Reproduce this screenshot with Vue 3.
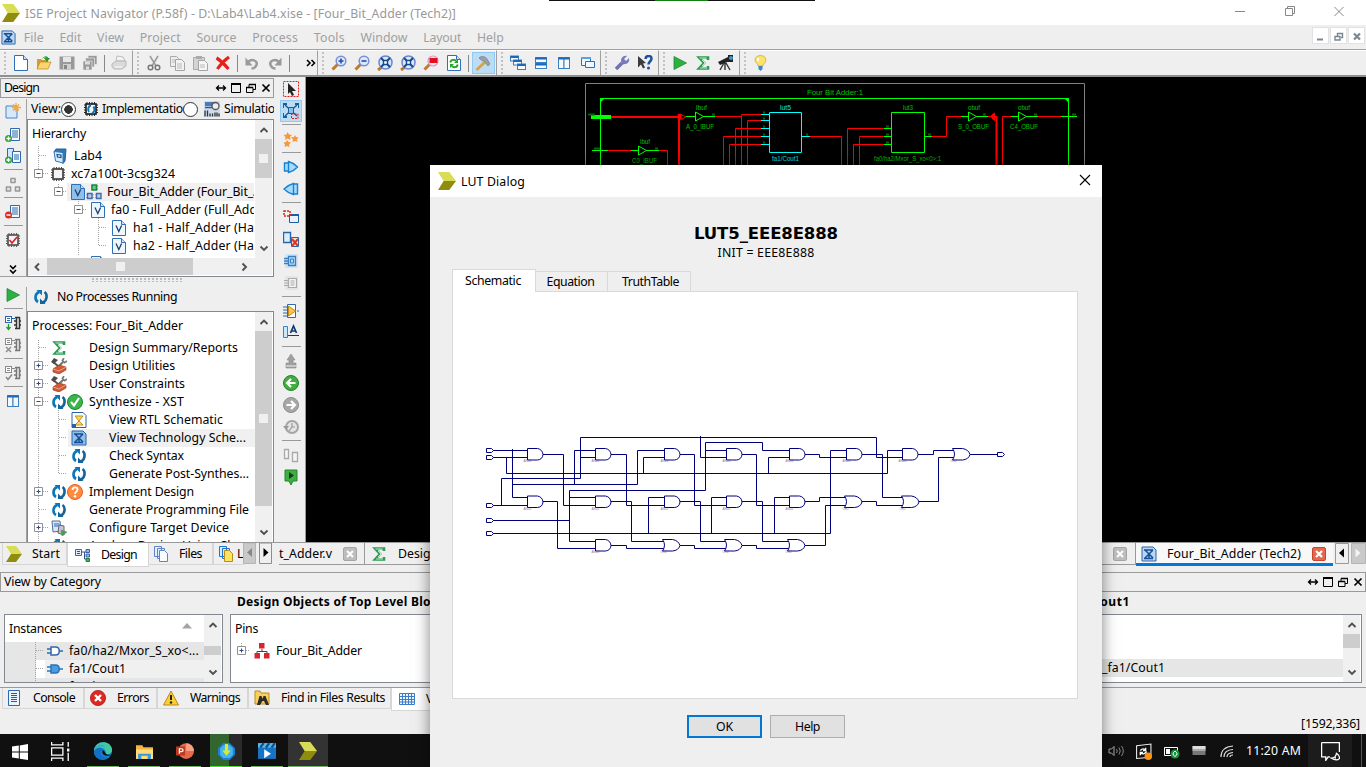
<script setup>
import { h } from 'vue'

// Spreads a label's letters so that it fills the given width in pixels.
const vFit = {
  mounted(el, { value }) {
    const w = el.getBoundingClientRect().width
    el.style.letterSpacing = (value - w) / el.textContent.length + 'px'
  },
}

const page = (extra = '') =>
  `<path d="M1.500 .5h9l4 4v11h-13z" fill="#fff" stroke="#2f6fb5"/><path d="M10.500 .5v4h4" fill="#cfe0f5" stroke="#2f6fb5"/>${extra}`
const lens = (extra) =>
  `<path d="M1.500 14.500L7 9" stroke="#c07a28" stroke-width="3"/><circle cx="10" cy="6" r="4.800" fill="#dbe8fb" stroke="#7a8fd6" stroke-width="1.500"/>${extra}`
const cycle =
  '<path d="M6 3C1.500 5 1.500 11 5 13" fill="none" stroke="#0b76b8" stroke-width="2.600"/><path d="M3.500 1h5.500v5.500z" fill="#0b76b8"/><path d="M10 13.500C14.500 11 14.500 5 11.500 3" fill="none" stroke="#14639b" stroke-width="2.600"/><path d="M12.500 15H7V9.500z" fill="#14639b"/>'
const chip = (c) =>
  `<path d="M4 1v14M6.500 1v14M9 1v14M11.500 1v14M1 4h14M1 6.500h14M1 9h14M1 11.500h14" stroke="${c}"/><rect x="3" y="3" width="10" height="10" fill="#f4f4f4" stroke="${c}" stroke-width="1.700"/>`
const schem = '<path d="M1 1h11l3 3v11H1z" fill="#b9d6f3" stroke="#2b62a6"/><path d="M3 4h9M3 12.500h9M4 4l4 4 4-4M4 12l4-4 4 4M8 8v5" fill="none" stroke="#174f94" stroke-width="1.500"/>'
const win = (x, y, w, hh) =>
  `<rect x="${x}" y="${y}" width="${w}" height="${hh}" fill="#f3f9ff" stroke="#3c7fc0"/><path d="M${x} ${y + 1}h${w}" stroke="#1d66bb" stroke-width="2"/>`
const runset = (c, g, mark) =>
  `<rect x=".5" y="1.500" width="6" height="6" fill="#fff" stroke="${c}"/><path d="M2 3.500h3M2 5.500h3M7 3.500h3" stroke="${c}"/><path d="M10 2.500h5M10 13.500h5M11.500 2v12M14.500 2v12M9 6h3M9 10h3M14 6h2M14 10h2" fill="none" stroke="${g}" stroke-width="1.500"/>${mark}`
const tools =
  '<path d="M2 4L11 11" stroke="#55514a" stroke-width="2"/><path d="M0 4l3-4 4 2-4 4z" fill="#4e4c48"/><path d="M7 9l6-6" stroke="#77756f" stroke-width="2.200"/><path d="M11 3l2-3M13 5l3-2" stroke="#77756f" stroke-width="1.600"/><path d="M2 11l6-4 7 2v3l-7 4-6-2z" fill="#cf5a35" stroke="#923219" stroke-width=".6"/><path d="M2 11l6 2 7-4" fill="none" stroke="#f0a080"/>'
const vfile = (fill) =>
  page().replace('fill="#fff"', `fill="${fill}"`) + '<path d="M5 5.500l2.800 6 2.800-6" fill="none" stroke="#1e3f6c" stroke-width="1.300"/>'

const icons = {
  logo: '<path d="M0 0h10l6 8H5z" fill="#d9dc55"/><path d="M5 8h11l-6 8H0z" fill="#8e8d10"/>',
  tech: schem,
  techSel: schem.replace('#b9d6f3', '#8fbfeb'),
  new: page(),
  open: '<path d="M1 4h4l1 1h6v9H1z" fill="#d79b35"/><path d="M1 14l3-7h11l-3 7z" fill="#fad56b" stroke="#b47b1a" stroke-width=".6"/><path d="M6 4c2-4 6-3 6-1h2l-3 4-3-4h2c-1-1-3 0-4 1z" fill="#209b2b"/>',
  save: '<path d="M.5 1.500h15v13H.5z" fill="#999"/><path d="M4 2h8v5H4z" fill="#e6e6e6"/><path d="M4 9h8v5H4z" fill="#d0d0d0"/><path d="M5 10h3v4H5z" fill="#888"/>',
  saveall: '<g stroke="#ececec" stroke-width=".7"><path d="M6 .5h9v9H6z" fill="#999"/><path d="M3.500 3h9v9h-9z" fill="#999"/><path d="M1 6h9v9H1z" fill="#999"/></g><path d="M3 6.500h5v3H3zM4 11.500h3v3H4z" fill="#ddd"/>',
  print: '<path d="M5 6l1-5 6 1 2 4z" fill="#f4f4f4" stroke="#bdbdbd"/><path d="M1 9l4-3h10v5l-4 3H3l-2-2z" fill="#dadada" stroke="#b8b8b8"/><path d="M4 12h7" stroke="#fff"/>',
  cut: '<path d="M4 1l6 10M12 1L6 11" stroke="#9a9a9a" stroke-width="1.500"/><circle cx="4.500" cy="12.500" r="2.300" fill="none" stroke="#777" stroke-width="1.500"/><circle cx="11.500" cy="12.500" r="2.300" fill="none" stroke="#777" stroke-width="1.500"/>',
  copy: '<path d="M1.500 1.500h6l2 2v8h-8z" fill="#eee" stroke="#aaa"/><path d="M6.500 4.500h6l3 3v8h-9z" fill="#f2f2f2" stroke="#a4a4a4"/><path d="M3 5h3M3 7h3M8 9h5M8 11h5M8 13h5" stroke="#bbb"/>',
  paste: '<path d="M1.500 2.500h11v12h-11z" fill="#d4d4d4" stroke="#aaa"/><path d="M4 1h6v3H4z" fill="#aaa"/><path d="M6.500 5.500h6l3 3v7h-9z" fill="#f5f5f5" stroke="#a4a4a4"/><path d="M8 10h5M8 12h5" stroke="#bbb"/>',
  del: '<path d="M1.500 3C5 5 10 10 13.500 14M14 2C10 5 5 10 2.500 14" stroke="#e8201a" stroke-width="3.200" fill="none"/>',
  undo: '<path d="M4 7c4-4 10-1 8.500 3-.8 2-2.500 3.500-5 3.500" fill="none" stroke="#9a9a9a" stroke-width="2.400"/><path d="M1.500 2.500v8h7z" fill="#9a9a9a"/>',
  redo: '<path d="M12 7C8 3 2 6 3.500 10c.8 2 2.500 3.500 5 3.500" fill="none" stroke="#9a9a9a" stroke-width="2.400"/><path d="M14.500 2.500v8h-7z" fill="#9a9a9a"/>',
  zin: lens('<path d="M10 3.500v5M7.500 6h5" stroke="#1d4fae" stroke-width="1.600"/>'),
  zout: lens('<path d="M7.500 6h5" stroke="#1d4fae" stroke-width="1.600"/>'),
  zfit: '<path d="M1 15l4-3" stroke="#c07a28" stroke-width="3"/><circle cx="8.500" cy="7.500" r="6.500" fill="#dbe8fb" stroke="#7284cf" stroke-width="1.500"/><path d="M4 3l9 9M13 3l-9 9" stroke="#124a86" stroke-width="1.800"/><path d="M6.500 5.500h4v4h-4z" fill="#fff" stroke="#124a86" stroke-width="1.400"/>',
  zred: '<path d="M1.500 14.500L7 9" stroke="#c07a28" stroke-width="3"/><circle cx="10" cy="6" r="5" fill="#fbe0ee" stroke="#d59ac4" stroke-width="1.200"/><path d="M6.500 3h8v5h-8z" fill="#e30e1c"/>',
  refresh: page('<path d="M4.500 7.500c0-3 4-3.500 5.500-1.500M11.500 9.500c0 3-4 3.500-5.500 1.500" fill="none" stroke="#27a22b" stroke-width="2"/><path d="M8 8h4V4zM8 9H4v4z" fill="#27a22b"/>'),
  hammer: '<path d="M1.500 15L10 7" stroke="#dca33a" stroke-width="2.800"/><path d="M4 3c3-3 7-1 8 1l3 5-2 2-4-5c-2 0-3-1-5-3z" fill="#98a0a8" stroke="#6b7480" stroke-width=".6"/>',
  cascade: win(0.5, 1, 8, 5) + win(3.5, 5, 8, 5) + win(7.5, 9, 8, 5.5),
  tileH: win(2.5, 2.500, 11, 5) + win(2.5, 8.500, 11, 5),
  tileV: win(2.5, 2.500, 5.5, 11) + win(8, 2.500, 5.5, 11),
  winfront: '<path d="M2.500 2.500h9v8h-9z" fill="#eef6ff" stroke="#2271bd"/><path d="M6.500 6.500h9v6h-9z" fill="#eef6ff" stroke="#2271bd"/><path d="M2 3h10" stroke="#5aa3e5" stroke-width="2"/>',
  wrench: '<path d="M2 14l6-6" stroke="#7472ae" stroke-width="3.500"/><path d="M8 9C5 3 10 0 13 1l-3 3 2 2 3-3c1 4-2 7-7 6z" fill="#7779b8"/>',
  whats: '<path d="M1 1l8 7-3 .5 2 4-2 1-2-4-3 3z" fill="#3c3c3c"/><path d="M8.500 4c0-4 6-4 6-.5 0 3-3 3-3 6" fill="none" stroke="#1b519e" stroke-width="2.500"/><circle cx="11.500" cy="13" r="1.500" fill="#1b519e"/>',
  play: '<path d="M2 1.500L14.500 8 2 14.500z" fill="#2cb03e" stroke="#23863a" stroke-width=".8"/>',
  sigma: '<path d="M13 5V2.500H4L9 8l-5 5.500h9V11" fill="none" stroke="#2f9c55" stroke-width="2.600"/><path d="M4.500 3h7M7 5l3 3-3 3M5 13h7" fill="none" stroke="#c9efd2" stroke-width=".9"/>',
  scope: '<path d="M0 7l10-5 2 4L2 10z" fill="#222"/><path d="M10 0h5v7h-5z" fill="#222"/><circle cx="13" cy="3" r="2" fill="#3a9ad9"/><path d="M6 8l-4 7M7 8v7M8 8l4 7" stroke="#333" stroke-width="1.400"/>',
  bulb: '<path d="M5 11c0-3-3-3-3-6 0-6 11-6 11 0 0 3-3 3-3 6z" fill="#ffe268" stroke="#cfa425" stroke-width=".7"/><path d="M5 3v3" stroke="#fff" stroke-width="2"/><path d="M5.500 11h4v3l-2 2-2-2z" fill="#3f83c3"/>',
  dblRight: '<path d="M4 5l3 3-3 3M8.500 5l3 3-3 3" fill="none" stroke="#000" stroke-width="1.600"/>',
  dblDown: '<path d="M5 3.500l3 3 3-3M5 8l3 3 3-3" fill="none" stroke="#000" stroke-width="1.600"/>',
  span: '<path d="M3.500 8h9M6 5.500L3.500 8 6 10.500M10 5.500l2.500 2.500-2.500 2.500" fill="none" stroke="#000" stroke-width="1.300"/>',
  max: '<path d="M3.500 4h9v8.500h-9z" fill="none" stroke="#000"/><path d="M3 4h10" stroke="#000" stroke-width="2"/>',
  rest: '<path d="M6 8V4.500h6.500v5H10M3.500 7.500H10v5H3.500z" fill="none" stroke="#000"/><path d="M6 4.500h7M3 7.500h7" stroke="#000" stroke-width="1.600"/>',
  x: '<path d="M4.500 4.500l7 7M11.500 4.500l-7 7" stroke="#000" stroke-width="1.700"/>',
  newsrc: '<path d="M1 3h11v12H1z" fill="#d7e8fb" stroke="#4a86c4"/><path d="M11 0v9M7 4.500h9M8 1.500l6 6M14 1.500l-6 6" stroke="#f5a93b" stroke-width="1.300"/>',
  addsrc: `<path d="M5.500 1.500h9v12h-9z" fill="#f4faff" stroke="#2c69ae"/><path d="M7 4h6M7 6h6M7 8h6M7 10h6" stroke="#2c69ae"/><circle cx="3.500" cy="11.500" r="3.500" fill="#33a53b"/><path d="M3.500 9.500v4M1.500 11.500h4" stroke="#fff" stroke-width="1.300"/>`,
  addcopy: `<path d="M2.500 .5h6v12h-6z" fill="#d3e7fa" stroke="#2c69ae"/><path d="M7.500 3.500h8v11h-8z" fill="#f4faff" stroke="#2c69ae"/><path d="M9 7h5M9 9h5M9 11h5" stroke="#2c69ae"/><circle cx="3.500" cy="12" r="3.500" fill="#33a53b"/><path d="M3.500 10v4M1.500 12h4" stroke="#fff" stroke-width="1.300"/>`,
  rmsrc: `<path d="M5.500 1.500h9v12h-9z" fill="#f4faff" stroke="#2c69ae"/><path d="M7 4h6M7 6h6M7 8h6M7 10h6" stroke="#2c69ae"/><circle cx="3.500" cy="11" r="3.500" fill="#df2b22"/><path d="M1.500 11h4" stroke="#fff" stroke-width="1.500"/>`,
  hier: '<g fill="#e4e4e4" stroke="#999" stroke-width="1.300"><path d="M6 1.500h4v4H6zM1.500 10h4v4h-4zM10.500 10h4v4h-4z"/></g><path d="M5 2.500h6M5 4.500h6M.5 11h6M.5 13h6M9.500 11h6M9.500 13h6" stroke="#999" stroke-dasharray="1 4"/>',
  chipcheck: chip('#555') + '<path d="M4.500 8l2.500 3 5-6" fill="none" stroke="#d32020" stroke-width="1.600"/>',
  chip: chip('#444'),
  chipblue: chip('#222') + '<path d="M8 4.500C5 5 4.500 9 6 11M9 12c3-1 3-4 1.500-6.500" fill="none" stroke="#0b76b8" stroke-width="2"/>',
  sim: '<path d="M0 0h16v16H0z" fill="#cfdcec"/><path d="M1 2h8v4.500H1M1 4h7" fill="none" stroke="#2458a6" stroke-width="1.500"/><circle cx="11.500" cy="5" r="3.500" fill="#eee" stroke="#555" stroke-width="1.300"/><path d="M1 15.500V9.500M3.500 9.500v6M6 12.500v3M8.500 12.500v3M11 15.500v-4M13 11.500v4M15 15.500v-3" fill="none" stroke="#333" stroke-width="1.300"/>',
  book: '<path d="M2 4l2-3h10l-1 12-2 2.500z" fill="#2f78b8" stroke="#2a5f96"/><path d="M2 3.500l9 1v10.500l-7.500-2z" fill="#d6ecfb" stroke="#2f78b8"/><path d="M5 6.500l4 .5v2.500l-3.500-.5z" fill="none" stroke="#1f4f8c" stroke-width="1.200"/>',
  v: vfile('#eef6ff'),
  vSel: vfile('#8fbfeb'),
  top: '<path d="M6 1h4.500v5H6z" fill="#79bd8b" stroke="#178944" stroke-width="1.400"/><path d="M1.500 9.500H6v5H1.500zM10.500 9.500H15v5h-4.500z" fill="#b7cdee" stroke="#4369a8" stroke-width="1.400"/><path d="M5 2.200h7M5 5h7" stroke="#178944" stroke-dasharray="1 5"/><path d="M.5 10.800h15M.5 13.500h15" stroke="#4369a8" stroke-dasharray="1 5 1 2 1 5"/>',
  cycle,
  tools,
  ok: '<circle cx="8" cy="8" r="7.500" fill="#3bb54a" stroke="#1a8731"/><path d="M4 8l3 3.500L12 4" fill="none" stroke="#fff" stroke-width="2.200"/>',
  ask: '<circle cx="8" cy="8" r="7.500" fill="#ff8a3c" stroke="#e4602a"/><path d="M5.500 6c0-3.500 5-3.500 5-.5C10.500 8 8 7.500 8 10" fill="none" stroke="#fff" stroke-width="1.800"/><circle cx="8" cy="12.300" r="1.200" fill="#fff"/>',
  rtl: '<path d="M1 .5h11l3 3v12H1z" fill="#fff" stroke="#2b62a6"/><path d="M4 4h8L8 9l4 4H4l4-4z" fill="#ffd65c" stroke="#c08e21"/><path d="M1 12h4v3H1z" fill="#2b62a6"/>',
  device: '<path d="M1 1h8l1 10-8 1z" fill="#dbe5f3" stroke="#526d9a"/><path d="M3 3h5v4H3z" fill="#7ea5db"/><path d="M8 5l5 1v9l-6-2z" fill="#c9c2dc" stroke="#666"/><path d="M10 10l6 2-5 4z" fill="#3aa648" stroke="#777" stroke-width=".5"/>',
  rs1: runset('#2a64aa', '#333', '<path d="M3.500 9v5M1.500 12l2 2.500 2-2.500" fill="none" stroke="#1c9a31" stroke-width="1.300"/>'),
  rs2: runset('#8a8a8a', '#777', '<path d="M1 10l5 5M6 10l-5 5" stroke="#888" stroke-width="1.300"/>'),
  rs3: runset('#8a8a8a', '#777', '<path d="M1 12l2 2.500 4-5" fill="none" stroke="#888" stroke-width="1.500"/>'),
  cols: win(2.5, 2.500, 5.5, 11) + win(8, 2.500, 5.5, 11),
  pick: '<path d="M.5 .5h15v15H.5z" fill="none" stroke="#e02020" stroke-dasharray="2 1"/><path d="M5 2l8 8h-4l2 4-2 1-2-4-2 2z" fill="#222"/>',
  nodes: '<path d="M2 2l12 11M14 2L2 13" stroke="#1b5c9c" stroke-width="1.500"/><path d="M5.500 4.500h5v6h-5z" fill="#8dbdeb" stroke="#1b5c9c"/><path d="M0 1h4M0 1v4M16 1h-4M16 1v4M0 14v-4M0 14h4" stroke="#1b5c9c" stroke-width="2"/><path d="M8.500 11h6.500v4.500H8.500z" fill="none" stroke="#e02020" stroke-dasharray="2 1"/>',
  stars: '<path d="M4.500 1l1.500 2.500 3 .5-2 2 .5 3-3-1.500L2 9l.5-3-2-2 3-.5zM12 4l1 2 2.500.5L14 8.500l.5 2.500-2.500-1-2.500 1 .5-2.500-2-2 3-.5zM4 9l1.500 2 2.500.5-2 2 .5 2.500L4 15l-2.500 1 .5-2.500-1.500-2L3 11z" fill="#f6983c"/>',
  ptRight: '<path d="M1.500 4h4v8h-4zM5.500 2.500Q11 4 14.500 8 11 12 5.500 13.500z" fill="#a6dbfb" stroke="#1882d6" stroke-width="1.400"/>',
  ptLeft: '<path d="M14.500 3h-4v10h4zM10.500 2.500Q5 4 1 8q4 4 9.500 5.500z" fill="#a6dbfb" stroke="#1882d6" stroke-width="1.400"/>',
  winadd: '<path d="M6.500 5.500h9v8h-9z" fill="#e7f2fc" stroke="#1d5c9f"/><path d="M6 6h10" stroke="#1d5c9f" stroke-width="2"/><path d="M1 2h6v5H1z" fill="none" stroke="#d92b22" stroke-width="1.500" stroke-dasharray="2 1"/>',
  windel: '<path d="M.5 1.500h7v10h-7z" fill="#dcedfc" stroke="#2368ad" stroke-width="1.400"/><path d="M8.500 6.500h7v9h-7z" fill="#f9dcd6" stroke="#2368ad"/><path d="M9 8l6 7M15 8l-6 7" stroke="#dd3427" stroke-width="2"/>',
  comp: '<path d="M2 1h13v14H2z" fill="#cfe4f6"/><path d="M5.500 3.500h7v9h-7zM1 5.500h4M1 8h4M1 10.500h4" fill="#b7dcf8" stroke="#3a7fbf" stroke-width="1.300"/><path d="M7.500 6h3v4h-3z" fill="none" stroke="#3a7fbf"/>',
  compG: '<path d="M2 1h13v14H2z" fill="#e4e4e4"/><path d="M5.500 3.500h8v9h-8zM1 5.500h4M1 8h4M1 10.500h4" fill="#f4f4f4" stroke="#aaa" stroke-width="1.200"/><path d="M7.500 6h4M7.500 8h4M7.500 10h4" stroke="#aaa"/>',
  yellowplay: '<path d="M4.500 1.500h8v13h-8z" fill="#fff" stroke="#2c69ae"/><path d="M0 4h4M0 7h4M0 10h4M0 13h4M14 8h2" stroke="#2c69ae"/><path d="M5.500 3l7 5-7 5z" fill="#fbc649" stroke="#c48a1b"/>',
  label: '<path d="M.5 2.500h4v11h-4z" fill="#cfe7fb" stroke="#2f86cf"/><path d="M7.500 9L10.500 2l3 7M8.500 7h4" fill="none" stroke="#123a7a" stroke-width="1.700"/><path d="M5 11.500h11" stroke="#123a7a"/>',
  up: '<path d="M8 1l4 6h-2v3h3v5H3v-5h3V7H4z" fill="#a0a0a0" stroke="#888" stroke-width=".6"/><path d="M3 13h10" stroke="#eee"/>',
  back: '<circle cx="8" cy="8" r="7.500" fill="#43ad3d" stroke="#23852b"/><path d="M8 4L4 8l4 4M4 8h8.500" fill="none" stroke="#fff" stroke-width="2.200"/>',
  fwd: '<circle cx="8" cy="8" r="7.500" fill="#a7a7a7" stroke="#8d8d8d"/><path d="M8 4l4 4-4 4M12 8H3.500" fill="none" stroke="#fff" stroke-width="2.200"/>',
  hist: '<circle cx="9" cy="8" r="6" fill="#e4e4e4" stroke="#a5a5a5" stroke-width="2"/><path d="M0 7h6l-3 4z" fill="#999"/><path d="M9 4v4h3M6 12l3-4" fill="none" stroke="#999" stroke-width="1.200"/>',
  twoG: '<path d="M1.500 2.500h4v9h-4zM9.500 5.500h5v9h-5z" fill="#f4f4f4" stroke="#a9a9a9" stroke-width="1.300"/>',
  marker: '<path d="M2 1h12v11h-4l-2 4-2-4H2z" fill="#3fae43" stroke="#2a8430"/><path d="M6 3l5 3.500L6 10z" fill="#173a1c"/>',
  designtab: '<path d="M.5 2.500h6v6h-6z" fill="#e7effc" stroke="#3d62a8"/><path d="M2 4.500h3M2 6.500h3M7 5h5M9.500 5v7h3" fill="none" stroke="#35528d"/><path d="M11 2.500h3.500v3H11zM11 7h3.500v3H11z" fill="#9ab5e5" stroke="#3d62a8"/><path d="M11 11.500h3.500v3H11z" fill="#48b069" stroke="#277c43"/>',
  files: '<path d="M1.500 .5h7v10h-7zM4.500 2.500h7v10h-7z" fill="#e6f0fc" stroke="#5f84c6"/><path d="M6.500 4.500h5l3 3v8h-8z" fill="#fafdff" stroke="#5f84c6"/>',
  libs: '<path d="M1.500 .5h7v10h-7zM4.500 2.500h7v10h-7z" fill="#d3eaff" stroke="#1d74ca"/><path d="M6.500 4.500h5l3 3v8h-8z" fill="#ffe265" stroke="#b78d1a"/>',
  console: '<path d="M2.500 .5h11v15h-11z" fill="#eaf4ff" stroke="#2c69ae"/><path d="M5 3.500h6M5 5.500h6M5 7.500h6M5 9.500h6M5 11.500h6" stroke="#1b5db5"/>',
  error: '<circle cx="8" cy="8" r="7.600" fill="#dc2a22" stroke="#a81713" stroke-width=".8"/><path d="M5 5l6 6M11 5l-6 6" stroke="#fff" stroke-width="2.400"/>',
  warn: '<path d="M8 1l7.500 14H.5z" fill="#fdce2f" stroke="#b98a1c"/><path d="M8 5v5" stroke="#222" stroke-width="2"/><circle cx="8" cy="12.500" r="1.200" fill="#222"/>',
  find: '<path d="M1 1h5l1 2h8v11H1z" fill="#f7cf5a" stroke="#b98c22"/><path d="M3 15l2.500-9h2l1 3 1-3h2L15 15h-3l-2-4H8.500L6 15z" fill="#2c2c2c"/>',
  table: '<path d="M.5 2.500h15v11H.5z" fill="#edf5ff"/><path d="M.5 2.500h15v11H.5zM.5 5.500h15M.5 8.500h15M.5 11h15M3.500 2v12M6.500 2v12M9.500 2v12M12.500 2v12" fill="none" stroke="#3d7cc7"/>',
  gate: '<path d="M4 4h4.500c5 0 5 8 0 8H4zM0 6h4M0 10h4M12 8h4" fill="#fff" stroke="#3267ad" stroke-width="1.500"/>',
  gateSel: '<path d="M4 4h4.500c5 0 5 8 0 8H4zM0 6h4M0 10h4M12 8h4" fill="#4b9de0" stroke="#2c73b7" stroke-width="1.500"/>',
  redhier: '<path d="M8 6v3M3 11V8.500h10V11" fill="none" stroke="#444"/><path d="M5 0h5.500v5.500H5zM.5 10H6v5.500H.5zM10 10h5.500v5.500H10z" fill="#d62630"/>',
  closeG: '<rect x="1.500" y="1.500" width="13" height="13" rx="1.500" fill="#bdbdbd" stroke="#a5a5a5"/><path d="M5 5l6 6M11 5l-6 6" stroke="#fff" stroke-width="2"/>',
  closeR: '<rect x="1.500" y="1.500" width="13" height="13" rx="1.500" fill="#e2694f" stroke="#c8442d"/><path d="M5 5l6 6M11 5l-6 6" stroke="#fff" stroke-width="2.200"/>',
  plus: '<path d="M3.500 3.500h8v8h-8z" fill="#fff" stroke="#919191"/><path d="M5.500 7.500h4M7.500 5.500v4" stroke="#2b4a8c"/>',
  minus: '<path d="M3.500 3.500h8v8h-8z" fill="#fff" stroke="#919191"/><path d="M5.500 7.500h4" stroke="#2b4a8c"/>',
  cUp: '<path d="M4.500 10L8 6.500 11.500 10" fill="none" stroke="#505050" stroke-width="1.900"/>',
  cDown: '<path d="M4.500 6.500L8 10l3.500-3.500" fill="none" stroke="#505050" stroke-width="1.900"/>',
  cLeft: '<path d="M10 4.500L6.500 8l3.500 3.500" fill="none" stroke="#505050" stroke-width="1.900"/>',
  cRight: '<path d="M6.500 4.500L10 8l-3.500 3.500" fill="none" stroke="#505050" stroke-width="1.900"/>',
  windows: '<path d="M0 2.500L6.800 1.500v6H0zM7.800 1.400L16 0v7.500H7.800zM0 8.500h6.800v6L0 13.500zM7.800 8.500H16V16l-8.200-1.200z" fill="#fff"/>',
  taskview: '<path d="M.5 0v2.500h9.500V0M.5 16v-2.500h9.500V16M.5 5h9.500v6H.5zM14.500 0v4M14.500 9v7" fill="none" stroke="#fff" stroke-width="1.100"/><path d="M13.500 5.500h2v2.500h-2z" fill="#fff"/>',
  edge: '<circle cx="8" cy="8" r="8" fill="#1684d6"/><path d="M0 8C0-1 14-3 16 6c1 4-4 6-6 4 2-4-5-7-10-2z" fill="#43c9a0"/><path d="M0 7C2 2 9 1 10 5 5 2 1 5 0 8z" fill="#2fa5d8"/><path d="M0 8c4-5 8-3 8-1-4 2-1 8 5 6-6 6-14 1-13-5z" fill="#1370c4"/><path d="M8 7c-2 3 1 6 6 5l2-1c-3 1-6 0-6-2z" fill="#111"/>',
  explorer: '<path d="M0 2h6l1 2h9v11H0z" fill="#efb53f"/><path d="M0 6h16v9H0z" fill="#ffdb7a"/><path d="M2 15v-5h12v5h-3v-3H5v3z" fill="#3d98da"/>',
  ppt: '<circle cx="9" cy="8" r="7" fill="#e46a4b"/><path d="M9 1a7 7 0 017 7H9z" fill="#f6a184"/><path d="M0 4h8v8H0z" fill="#bd3a20"/><path d="M3 10.500V6h1.800c2 0 2 2.500 0 2.500H3" fill="none" stroke="#fff" stroke-width="1.100"/>',
  idm: '<path d="M5 0h6l5 5v6l-5 5H5l-5-5V5z" fill="#1d7fd5"/><path d="M5 2h6l3 3v6l-3 3H5l-3-3V5z" fill="#44b4f1"/><path d="M6.500 1h3v6H12l-4 5-4-5h2.500z" fill="#d5ea38"/>',
  movie: '<path d="M0 1h16v14H0z" fill="#1574c6"/><path d="M0 1h16v4H0z" fill="#56b8ea"/><path d="M2 5l3-4M7 5l3-4M12 5l3-4" stroke="#114d91" stroke-width="2"/><path d="M5.500 6.500l6 4-6 4z" fill="#fff"/>',
  vol: '<path d="M1 6h2.500L6 3.500v9L3.500 10H1z" fill="none" stroke="#aaa"/><path d="M8.500 6q1.500 2 0 4M11 4.500q2.500 3.500 0 7M13.500 3q3.500 5 0 10" fill="none" stroke="#888"/>',
  upd: '<path d="M1.500 2.500L15 1v12.500l-13.500 1z" fill="none" stroke="#eee"/><path d="M5 7q3-3 5 0M11 8q-3 4-6 1M10 4.500V7H7.500M5 11.500V9h2.500" fill="none" stroke="#fff" stroke-width="1.300"/><circle cx="12.500" cy="12.500" r="3.500" fill="#ff9411"/>',
  batt: '<path d="M.5 4.500h13v8H.5z" fill="none" stroke="#fff"/><path d="M2 6h4v5H2z" fill="#fff"/><circle cx="11" cy="11" r="4.500" fill="#16913b"/><path d="M11 8q4 3 0 5.500Q7 11 11 8z" fill="none" stroke="#fff"/>',
  kb: '<path d="M1.500 3h13v9h-13z" fill="#777"/><path d="M1.500 3h13v3h-13z" fill="#ddd"/><path d="M1.500 6h13v2h-13z" fill="#aaa"/>',
  wifi: '<path d="M2 14Q2 4 14 3M5 14Q5 7 14 6.500M8 14Q8 10 14 9.500M11 14q0-2 3-2" fill="none" stroke="#ddd" stroke-width="1.200"/>',
  notif: '<path d="M.5 .5h15v8M7.500 12.500H6l-2 3v-3H.5V.5" fill="none" stroke="#fff" stroke-width="1.100"/><path d="M8.500 13.500q4 0 4.500-4 3 2 2.500 4.500-2.500 2.500-7-.5zM12 14v-2.500" fill="none" stroke="#fff"/>',
}
const Ic = (p) =>
  h('svg', { class: 'ic', width: p.s || 16, height: p.s || 16, viewBox: '0 0 16 16', innerHTML: icons[p.n] })
Ic.props = ['n', 's']

const menus = [['File', 20], ['Edit', 22], ['View', 27], ['Project', 41], ['Source', 40], ['Process', 46], ['Tools', 31], ['Window', 47], ['Layout', 38], ['Help', 27]]
const bars = [
  { w: 133, items: ['new', 'open', 'save', 'saveall', '|', 'print'] },
  { w: 185, items: ['cut', 'copy', 'paste', 'del', '|', 'undo', 'redo', '|', '', 'dblRight'] },
  { w: 179, items: ['zin', 'zout', 'zfit', 'zfit', 'zred', 'refresh', '|', 'hammer'] },
  { w: 104, items: ['cascade', 'tileH', 'tileV', 'winfront'] },
  { w: 58, items: ['wrench', 'whats'] },
  { w: 81, items: ['play', 'sigma', 'scope'] },
  { w: 0, items: ['bulb'] },
]

// Turns a list of [icon, centre] pairs into the gaps of a vertical icon strip.
const strip = (top, size, list) => {
  let bottom = top
  return list.map(([n, c]) => {
    const s = n === '|' ? 1 : size
    const start = c - Math.floor(s / 2)
    const gap = start - bottom
    bottom = start + s
    return { n, gap: gap + 'px' }
  })
}
const side1 = strip(99, 16, [['newsrc', 111], ['addsrc', 135], ['addcopy', 156], ['|', 169], ['hier', 185], ['|', 197], ['rmsrc', 212], ['|', 225], ['chipcheck', 240], ['dblDown', 270]])
const side2 = strip(287, 16, [['play', 295], ['|', 308], ['rs1', 323], ['rs2', 345], ['|', 358], ['rs3', 373], ['|', 386], ['cols', 401]])
const vbar = strip(77, 22, [['pick', 89], ['nodes', 111], ['|', 124], ['stars', 139], ['|', 152], ['ptRight', 167], ['ptLeft', 189], ['|', 202], ['winadd', 217], ['windel', 239], ['comp', 261], ['compG', 283], ['|', 296], ['yellowplay', 311], ['label', 332], ['|', 346], ['up', 361], ['back', 383], ['fwd', 405], ['hist', 427], ['|', 440], ['twoG', 455], ['marker', 477]])

const hier = [
  { pad: 24, icons: ['book'], t: 'Lab4', w: 28, c: 'far' },
  { pad: 4, exp: 'minus', icons: ['chip'], t: 'xc7a100t-3csg324', w: 104 },
  { pad: 24, exp: 'minus', icons: ['vSel', 'top'], t: 'Four_Bit_Adder (Four_Bit_A', w: 154, sel: true },
  { pad: 44, exp: 'minus', icons: ['v'], t: 'fa0 - Full_Adder (Full_Add', w: 146 },
  { pad: 83, icons: ['v'], t: 'ha1 - Half_Adder (Ha', w: 121, c: 'far' },
  { pad: 83, icons: ['v'], t: 'ha2 - Half_Adder (Ha', w: 121, c: 'far' },
  { pad: 44, exp: 'plus', icons: ['v'], t: 'fa1 - Full_Adder (Full_Add', w: 145 },
]
const procs = [
  { icons: ['sigma'], t: 'Design Summary/Reports', w: 149 },
  { exp: 'plus', icons: ['tools'], t: 'Design Utilities', w: 86 },
  { exp: 'plus', icons: ['tools'], t: 'User Constraints', w: 96 },
  { exp: 'minus', icons: ['cycle', 'ok'], t: 'Synthesize - XST', w: 95 },
  { sub: true, icons: ['rtl'], t: 'View RTL Schematic', w: 114 },
  { sub: true, icons: ['techSel'], t: 'View Technology Sche...', w: 137, sel: true },
  { sub: true, icons: ['cycle'], t: 'Check Syntax', w: 75 },
  { sub: true, icons: ['cycle'], t: 'Generate Post-Synthes...', w: 140 },
  { exp: 'plus', icons: ['cycle', 'ask'], t: 'Implement Design', w: 105 },
  { icons: ['cycle'], t: 'Generate Programming File', w: 160 },
  { exp: 'plus', icons: ['device'], t: 'Configure Target Device', w: 140 },
  { icons: ['cycle'], t: 'Analyze Design Using Ch', w: 146 },
]
const bottomTabs = [
  { n: 'console', t: 'Console', w: 82, tw: 42 },
  { n: 'error', t: 'Errors', w: 73, tw: 32 },
  { n: 'warn', t: 'Warnings', w: 91, tw: 50 },
  { n: 'find', t: 'Find in Files Results', w: 143, tw: 104 },
]
const apps = [
  { n: 'windows', l: 0, w: 40, s: 16 }, { n: 'taskview', l: 0, w: 40, s: 19 },
  { n: 'edge', l: 7, w: 32, s: 18, on: 1 }, { n: 'explorer', l: 9, w: 32, s: 17, on: 1 },
  { n: 'ppt', l: 9, w: 32, s: 18, on: 1 }, { n: 'idm', l: 9, w: 32, s: 17, on: 1, dl: 1 },
  { n: 'movie', l: 9, w: 32, s: 18, on: 1 }, { n: 'logo', l: 5, w: 40, s: 18, on: 1, act: 1 },
]

// LUT gate network
const ands = [[527.5, 454], [595.5, 454], [664.5, 454], [726.5, 454], [789.5, 454], [846.5, 454], [902.5, 454], [527.5, 501.5], [595.5, 501.5], [664.5, 501.5], [726.5, 501.5], [789.5, 501.5], [595.5, 545]]
const ors = [[952.5, 454], [844.5, 501.5], [901.5, 501.5], [662.5, 545], [724.5, 545], [787.5, 545]]
const ports = [450.5, 457.5, 505.5, 520.5, 533.5]
const wires = [
  'M493 450.5H527M512.5 449V497.5H527M512.5 484.5H637.5V450.5H664M574.5 484.5V450.5H595',
  'M493 457.5H527M506.5 457.5V473.5H887.5V450.5H902M643.5 473.5V457.5H664M768.5 473.5V457.5H789',
  'M493 505.5H527M501.5 505.5V478.5H580.5V437.5H876.5V457.5H902M580.5 457.5H595M700.5 436V457.5H726',
  'M493 520.5H569.5M569.5 497.5H595M595 541.5H569.5V490.5H705.5V442.5H762.5V450.5H789M705.5 450.5H726',
  'M493 533.5H830.5V450.5H846M648.5 533.5V497.5H664M711.5 533.5V497.5H726M774.5 533.5V497.5H789',
  'M543 454.5H563.5V505.5H595M611 454.5H626.5V505.5H664M680 454.5H694.5V505.5H726M742 454.5H756.5V505.5H789',
  'M805 454.5H819.5V457.5H846M862 454.5H882.5V497.5H904M918 454.5H933.5V450.5H955M970 454.5H997',
  'M543 501.5H557.5V548.5H595M611 501.5H631.5V541.5H665M680 501.5H700.5V541.5H727M742 501.5H762.5V541.5H790M805 501.5H819.5V497.5H847M862 501.5H876.5V505.5H904M919 501.5H938.5V457.5H955',
  'M611 545.5H626.5V548.5H665M680 545.5H694.5V548.5H727M742 545.5H756.5V548.5H790M805 545.5H825.5V505.5H847',
].join('')
const bufs = [[695.5, 117], [638.5, 151], [968.5, 117], [1018.5, 117]]
const labels = [
  [807, 95, 'Four Bit Adder:1', 56], [696, 109.5, 'ibuf', 11], [686, 128.5, 'A_0_IBUF', 28], [640, 143.5, 'ibuf', 10], [632, 162.5, 'C0_IBUF', 25],
  [903, 109.5, 'lut3', 10], [874, 160.5, 'fa0/ha2/Mxor_S_xo<0>:1', 67], [968, 109.5, 'obuf', 12], [958, 128.5, 'S_0_OBUF', 31], [1018, 109.5, 'obuf', 12], [1010, 128.5, 'C4_OBUF', 28],
]
</script>

<template>
  <div class="screen">
    <header class="title">
      <Ic n="logo" s="18" /><span v-fit="431">ISE Project Navigator (P.58f) - D:\Lab4\Lab4.xise - [Four_Bit_Adder (Tech2)]</span>
      <div class="notch"><i></i></div>
      <svg class="winbtns" width="110" height="16"><path d="M1 8.500h10M51.500 5.500h7v7h-7zM53.500 5v-1.500h7v7H59M100.500 4l9 9M109.500 4l-9 9" fill="none" stroke="#888" /></svg>
    </header>
    <nav class="menu">
      <Ic n="tech" s="15" />
      <span v-for="m in menus" :key="m[0]" v-fit="m[1]">{{ m[0] }}</span>
      <div class="mdi">
        <svg width="17" height="17"><path d="M4 11.500h6" stroke="#7a8593" stroke-width="2" /></svg>
        <svg width="17" height="17"><path d="M6.500 8V5.500h5v4H10M4 8.500h5v3.500H4z" fill="none" stroke="#7a8593" stroke-width="1.400" /></svg>
        <svg width="17" height="17"><path d="M5 5.500l6 6M11 5.500l-6 6" stroke="#7a8593" stroke-width="2.200" /></svg>
      </div>
    </nav>
    <div class="toolbar">
      <div v-for="(b, i) in bars" :key="i" class="bar" :class="{ last: !b.w }" :style="{ width: b.w ? b.w + 'px' : 'auto' }">
        <i class="grip"></i>
        <template v-for="(n, j) in b.items" :key="j">
          <i v-if="n === '|'" class="vsep"></i>
          <i v-else-if="!n" class="gap"></i>
          <div v-else class="tb" :class="{ on: n === 'hammer' }"><Ic :n="n" /></div>
        </template>
      </div>
    </div>

    <main class="work">
      <section class="left">
        <div class="dockhead"><span v-fit="35">Design</span><div class="dockbtns"><Ic n="span" /><Ic n="max" /><Ic n="rest" /><Ic n="x" /></div></div>
        <div class="split">
          <div class="strip s1">
            <template v-for="(r, i) in side1" :key="i">
              <i v-if="r.n === '|'" class="hsep" :style="{ marginTop: r.gap }"></i>
              <div v-else class="cell" :style="{ marginTop: r.gap }"><Ic :n="r.n" /></div>
            </template>
          </div>
          <div class="pane">
            <div class="viewrow">
              <span v-fit="30">View:</span><i class="radio on"></i><Ic n="chipblue" /><span v-fit="88" class="impl">Implementation</span><i class="radio r2"></i><Ic n="sim" /><span v-fit="58">Simulation</span>
            </div>
            <div class="box tree1">
              <svg class="guides" width="225" height="137"><path d="M10.500 26v34M11 35.500h8M15 53.500h5M30.500 64v4M35 71.500h4M50.500 81v4M55 89.500h4M50.500 98v38M70.500 98v27M71 107.500h8M71 125.500h8" /></svg>
              <div class="scroll">
                <div class="head"><span v-fit="54">Hierarchy</span></div>
                <div v-for="(r, i) in hier" :key="i" class="row" :style="{ paddingLeft: r.pad + 'px' }">
                  <Ic v-if="r.exp" :n="r.exp" class="exp" />
                  <div class="fill" :class="{ sel: r.sel, in: r.exp, far: r.c }"><Ic v-for="c in r.icons" :key="c" :n="c" /><span v-fit="r.w">{{ r.t }}</span></div>
                </div>
              </div>
              <div class="vs"><Ic n="cUp" /><div class="thumb a"><i></i></div><Ic n="cDown" /></div>
              <div class="hs"><Ic n="cLeft" /><div class="thumb"><i></i></div><Ic n="cRight" /></div>
            </div>
          </div>
        </div>
        <div class="dots"><i></i></div>
        <div class="split low">
          <div class="strip s2">
            <template v-for="(r, i) in side2" :key="i">
              <i v-if="r.n === '|'" class="hsep" :style="{ marginTop: r.gap }"></i>
              <div v-else class="cell" :style="{ marginTop: r.gap }"><Ic :n="r.n" /></div>
            </template>
          </div>
          <div class="pane">
            <div class="status"><Ic n="cycle" /><span v-fit="120">No Processes Running</span></div>
            <div class="box tree2">
              <svg class="guides" width="225" height="230"><path d="M10.500 28v202M11 35.500h8M15 53.500h5M15 71.500h5M15 89.500h5M15 179.500h5M11 197.500h8M15 215.500h5M30.500 98v63M31 107.500h8M31 125.500h8M31 143.500h8M31 161.500h8" /></svg>
              <div class="scroll">
                <div class="head"><span v-fit="151">Processes: Four_Bit_Adder</span></div>
                <div v-for="(r, i) in procs" :key="i" class="row p" :class="{ sub: r.sub }">
                  <div class="ex"><Ic v-if="r.exp" :n="r.exp" /></div>
                  <div class="fill" :class="{ sel: r.sel }"><div class="pi"><Ic v-for="c in r.icons" :key="c" :n="c" /></div><span v-fit="r.w">{{ r.t }}</span></div>
                </div>
              </div>
              <div class="vs"><Ic n="cUp" /><div class="thumb b"><i></i></div><Ic n="cDown" /></div>
            </div>
          </div>
        </div>
      </section>

      <aside class="vbar">
        <template v-for="(r, i) in vbar" :key="i">
          <i v-if="r.n === '|'" class="hsep" :style="{ marginTop: r.gap }"></i>
          <div v-else class="vc" :class="{ on: r.n === 'nodes' }" :style="{ marginTop: r.gap }"><Ic :n="r.n" /></div>
        </template>
      </aside>

      <section class="canvas">
        <svg width="1060" height="465" viewBox="306 77 1060 465">
          <path d="M585.500 542V83.500H1084.500V542" class="n gray" />
          <path d="M600.500 542V98.500H1068.500V542" class="n lime" />
          <path d="M600 98h5l-5 5zM1069 98h-5l5 5z" fill="#0f0" />
          <path d="M608 117H679V170M992 117h4.500V170" class="n red w2" />
          <path d="M678 114.500l3-.5v5l-3 .5zM994.500 113l-3 2.500v2l3 3z" class="red" fill="#f00" />
          <path d="M681 114.500l5 2.500-5 2.500M987 116.500h5M715 116.500H741.500M741.500 170V114.500H762M747.500 170V120.500H762M735.500 170V128.500H762M723.500 170V136.500H762M729.500 170V144.500H762M809 136.500H841.500V170M847.500 170V128.500H884M859.500 170V136.500H884M853.500 170V144.500H884M931 136.500H946.500V116.500H962M1002.500 170V116.500H1012M1037 116.500H1062M607 150.500H632M658 150.500H667.500V170" class="n red" />
          <path d="M591 117h20" stroke="#0f0" stroke-width="4" />
          <path d="M686 116.500h10M703 116.500h12M592 150.500h16M631 150.500h8M646 150.500h13M961 116.500h8M976 116.500h12M1011 116.500h8M1026 116.500h12M1061 116.500h16M884 128.500h7M884 136.500h7M884 144.500h7M925 136.500h7M891.500 112.500h33v40h-33z" class="n lime" />
          <path d="M761 114.500h8M761 120.500h8M761 128.500h8M761 136.500h8M761 144.500h8M802 136.500h8M769.500 112.500h32v40h-32z" class="n cyan" />
          <path v-for="b in bufs" :key="b[0]" :d="`M${b[0]} ${b[1] - 5}v9l8-4.500z`" class="n lime" />
          <g class="lab"><text v-for="(l, i) in labels" :key="i" :x="l[0]" :y="l[1]" :textLength="l[3]" lengthAdjust="spacingAndGlyphs">{{ l[2] }}</text></g>
          <g class="lab c"><text x="780" y="109.500" textLength="11" lengthAdjust="spacingAndGlyphs">lut5</text><text x="772" y="160.500" textLength="27" lengthAdjust="spacingAndGlyphs">fa1/Cout1</text></g>
          <path d="M588 114.500h7M594 148.500h6M763 112.500h2M763 118.500h2M763 126.500h2M763 134.500h2M763 142.500h2M806 134.500h2M886 126.500h3M886 134.500h3M886 142.500h3M928 134.500h3M712 114.500h3M983 114.500h3M1034 114.500h3M1072 114.500h4M655 148.500h3" stroke="#086008" stroke-width="2" />
        </svg>
      </section>
    </main>

    <div class="tabs">
      <div class="ltabs">
        <div class="tab start"><Ic n="logo" /><span v-fit="28">Start</span></div>
        <div class="tab des"><Ic n="designtab" /><span v-fit="36">Design</span></div>
        <div class="tab fil"><Ic n="files" /><span v-fit="23">Files</span></div>
        <div class="tab lib"><Ic n="libs" /><span>L</span></div>
        <svg class="nav" width="32" height="21"><path d="M.5 0h12v20.500H.5z" fill="#c9c9c9" stroke="#b5b5b5" /><path d="M9 5v9l-5-4.500z" fill="#888" /><path d="M16.500 0h12v20.500h-12z" fill="#efefef" stroke="#8e8e8e" /><path d="M20.500 5v9l5-4.500z" fill="#000" /></svg>
      </div>
      <div class="dtabs">
        <div class="tab d1"><span v-fit="53">t_Adder.v</span><Ic n="closeG" /></div>
        <div class="tab d2"><Ic n="sigma" /><span v-fit="149">Design Summary/Reports</span></div>
        <div class="tab d3"><Ic n="closeG" /></div>
        <div class="tab d4"><Ic n="tech" /><span v-fit="134">Four_Bit_Adder (Tech2)</span><Ic n="closeR" /></div>
        <svg class="dnav" width="31" height="22"><path d="M.5 .5h13v20H.5z" fill="#efefef" stroke="#999" /><path d="M9 5.500v9l-5-4.500z" fill="#000" /><path d="M16.500 .5h14v20h-14z" fill="#c9c9c9" stroke="#b5b5b5" /><path d="M20.500 5.500v9l5-4.500z" fill="#f4f4f4" /></svg>
      </div>
    </div>

    <section class="cat">
      <div class="dockhead wide"><span v-fit="97">View by Category</span><div class="dockbtns"><Ic n="span" /><Ic n="max" /><Ic n="rest" /><Ic n="x" /></div></div>
      <div class="caps"><b v-fit="208">Design Objects of Top Level Block</b><b v-fit="218">Properties of Instance: fa1/Cout1</b></div>
      <div class="lists">
        <div class="box inst">
          <div class="scroll">
            <div class="head"><span v-fit="53">Instances</span><svg width="10" height="6"><path d="M0 5.500L5 0l5 5.500z" fill="#a5a5a5" /></svg></div>
            <div class="ir sel"><Ic n="gate" /><span v-fit="130">fa0/ha2/Mxor_S_xo&lt;...</span></div>
            <div class="ir half"><Ic n="gateSel" /><span v-fit="57">fa1/Cout1</span></div>
            <div class="ir sel"><Ic n="gate" /><span v-fit="130">fa1/ha2/Mxor_S_xo&lt;...</span></div>
          </div>
          <svg class="guides" width="45" height="67"><path d="M30.500 27v40M31 35.500h8M31 53.500h8" /></svg>
          <div class="vs"><Ic n="cUp" /><div class="thumb c"></div><Ic n="cDown" /></div>
        </div>
        <div class="box pins">
          <div class="head"><span v-fit="23">Pins</span></div>
          <div class="ir"><Ic n="plus" /><Ic n="redhier" /><span v-fit="86">Four_Bit_Adder</span></div>
          <svg class="guides" width="25" height="67"><path d="M10.500 28v4M15 35.500h4" /></svg>
        </div>
        <div class="box sig">
          <div class="scroll"><div class="srow"><span v-fit="63">_fa1/Cout1</span></div></div>
          <div class="vs"><Ic n="cUp" /><div class="thumb d"></div><Ic n="cDown" /></div>
        </div>
      </div>
    </section>

    <div class="btabs">
      <div v-for="b in bottomTabs" :key="b.t" class="bt" :style="{ width: b.w + 'px' }"><Ic :n="b.n" /><span v-fit="b.tw">{{ b.t }}</span></div>
      <div class="bt cur"><Ic n="table" /><span v-fit="97">View by Category</span></div>
    </div>
    <div class="coords"><span v-fit="59">[1592,336]</span></div>

    <footer class="task">
      <div v-for="a in apps" :key="a.n" class="app" :class="{ run: a.on, dl: a.dl, act: a.act }" :style="{ width: a.w + 'px', marginLeft: a.l + 'px' }"><Ic :n="a.n" :s="a.s" /></div>
      <div class="tray">
        <Ic n="vol" /><Ic n="upd" s="17" /><Ic n="batt" /><Ic n="kb" /><Ic n="wifi" />
        <span v-fit="55">11:20 AM</span>
        <div class="nt"><Ic n="notif" s="19" /></div><i></i>
      </div>
    </footer>

    <div class="dialog">
      <div class="dtitle"><Ic n="logo" s="18" /><span v-fit="64">LUT Dialog</span><svg width="12" height="12"><path d="M1 1l10 10M11 1L1 11" stroke="#000" stroke-width="1.100" /></svg></div>
      <h1><span v-fit="144">LUT5_EEE8E888</span></h1>
      <p><span v-fit="97">INIT = EEE8E888</span></p>
      <div class="dlgtabs"><div class="cur"><span v-fit="56">Schematic</span></div><div class="eq"><span v-fit="48">Equation</span></div><div class="tt"><span v-fit="57">TruthTable</span></div></div>
      <div class="sheet">
        <svg width="624" height="406" viewBox="453 292 624 406">
          <g class="net">
            <path :d="wires" />
            <path v-for="(a, i) in ands" :key="'a' + i" class="g" :d="`M${a[0]} ${a[1] - 5.5}h10q5 1 5.500 6q-.5 5-5.500 5.500h-10z`" />
            <path v-for="(a, i) in ors" :key="'o' + i" class="g" :d="`M${a[0]} ${a[1] - 5.5}h10q6 1 7.500 6q-1.500 5-7.500 5.500h-10q4-6 0-11.500z`" />
            <path v-for="y in ports" :key="y" class="g" :d="`M486.500 ${y - 2}h5l2 2-2 2h-5z`" />
            <path class="g" d="M997.500 452.500h5l2 2-2 2h-5z" />
          </g>
          <g class="tiny">
            <text v-for="(a, i) in ands" :key="'t' + i" :x="a[0] - 4" :y="a[1] + 8">AND2</text>
            <text v-for="(a, i) in ors" :key="'u' + i" :x="a[0] - 2" :y="a[1] + 8">OR2</text>
          </g>
        </svg>
      </div>
      <div class="btns"><button class="ok"><span v-fit="17">OK</span></button><button><span v-fit="25">Help</span></button></div>
    </div>
  </div>
</template>

<style>
html, body { margin: 0; overflow: hidden; }
</style>
<style scoped>
.screen { position: relative; width: 1366px; height: 767px; overflow: hidden; background: #efefef; font: 12.3px/18px 'Noto Sans', 'Open Sans', sans-serif; color: #000; display: flex; flex-direction: column; }
.screen * { box-sizing: border-box; }
span, b { display: inline-block; white-space: pre; flex: none; }
.ic, svg { display: block; flex: none; }
i { display: block; flex: none; }
.title { height: 25px; background: #fff; display: flex; align-items: center; color: #999; padding-left: 2px; flex: none; }
.title > span { margin-left: 5px; margin-top: 2px; }
.notch { position: absolute; left: 549px; top: 0; width: 266px; height: 1px; background: #111; }
.notch i { width: 53px; height: 1px; background: #108010; margin-left: 106px; }
.winbtns { margin: 0 22px 3px auto; }
.menu { height: 24px; flex: none; display: flex; align-items: center; gap: 15.700px; color: #a0a0a0; padding-left: 1px; }
.menu > .ic { margin-right: -8px; }
.menu > span { margin-top: 1px; }
.mdi { margin: -4px 1px 0 auto; display: flex; gap: 1px; }
.mdi svg { background: #fff; border: 1px solid #e2e2e2; }
.toolbar { height: 28px; flex: none; border-top: 1px solid #a0a0a0; border-bottom: 2px solid #8f8f8f; display: flex; }
.bar { display: flex; align-items: center; border-right: 1px solid #a0a0a0; border-top: 1px solid #fff; flex: none; }
.bar.last { border-right: 0; flex: 1; }
.grip { width: 3px; height: 22px; margin: 0 2.5px 0 4px; background: radial-gradient(circle at 1px 1px, #c2c2c2 1px, transparent 1.3px) 0 0 / 3px 4px; }
.tb { width: 23px; height: 22px; display: flex; align-items: center; justify-content: center; flex: none; }
.tb.on, .vc.on { background: #bcdcf4; border: 1px solid #90c8f6; }
.vsep { width: 1px; height: 17px; margin: 0 2.5px; background: #888; }
.gap { width: 7px; }
.work { height: 465px; flex: none; display: flex; }
.left { width: 279px; flex: none; padding-right: 5px; display: flex; flex-direction: column; }
.dockhead { height: 20px; flex: none; margin-top: 1px; border: 1px solid #9a9a9a; display: flex; align-items: center; padding-left: 3px; justify-content: space-between; }
.dockbtns { display: flex; }
.dockbtns .ic { margin-right: -1px; }
.split { display: flex; height: 178px; flex: none; margin-top: 1px; }
.strip { width: 27px; flex: none; border-right: 1px solid #a0a0a0; border-bottom: 1px solid #a0a0a0; display: flex; flex-direction: column; align-items: center; }
.s2 { border-bottom: 0; }
.hsep { width: 19px; height: 1px; background: #999; }
.pane { flex: 1; min-width: 0; display: flex; flex-direction: column; }
.viewrow { height: 20px; display: flex; align-items: center; overflow: hidden; padding-left: 4px; }
.radio { width: 15px; height: 15px; border-radius: 50%; border: 1px solid #333; background: #fff; }
.radio.on { background: radial-gradient(circle, #333 0 4px, #fff 4.5px); margin: 0 7px 0 0; }
.impl { margin-left: 3px; margin-right: -7px; }
.r2 { margin-right: 6px; position: relative; }
.r2 + .ic { margin-right: 4px; }
.box { background: #fff; border: 1px solid #828790; position: relative; display: flex; }
.tree1 { flex: 1; flex-wrap: wrap; align-content: flex-start; overflow: hidden; }
.scroll { flex: 1; min-width: 0; overflow: hidden; position: relative; }
.tree1 .scroll { height: 138px; flex: none; width: 226px; }
.head { height: 27px; padding: 4.500px 0 0 4px; flex: none; }
.row { display: flex; height: 18px; align-items: center; }
.fill { display: flex; align-items: center; height: 18px; flex: 1; min-width: 0; overflow: hidden; }
.fill > .ic + span { margin-left: 5px; }
.fill.far > .ic + span { margin-left: 6px; }
.fill.in { padding-left: 3px; }
.fill.sel { background: #f0f0f0; }
.guides { position: absolute; left: 0; top: 0; }
.guides path { fill: none; stroke: #a5a5a5; stroke-dasharray: 1 1; }
.exp { margin-left: -1px; }
.vs { width: 17px; flex: none; background: #f0f0f0; display: flex; flex-direction: column; align-items: center; margin-left: auto; margin-right: 1px; padding-top: 2px; }
.thumb { background: #cdcdcd; display: flex; align-items: center; justify-content: center; flex: none; }
.thumb i { width: 9px; height: 9px; background: #f0f0f0; }
.vs .thumb { width: 17px; }
.thumb.a { height: 39px; margin: 1px 0 62px; }
.hs { width: 244px; height: 17px; background: #f0f0f0; display: flex; align-items: center; padding-left: 1px; }
.hs .thumb { width: 146px; height: 17px; margin: 0 43px 0 2px; }
.dots { height: 10px; display: flex; justify-content: center; flex: none; padding-top: 1px; }
.dots i { width: 90px; height: 4px; margin: 0 4px; background: radial-gradient(circle at 1px 1px, #bbb 1px, transparent 1.2px) 0 0 / 4px 3px; }
.split.low { height: 255px; margin-top: 0; }
.status { height: 24px; flex: none; display: flex; align-items: center; padding: 0 0 5px 6px; gap: 8px; }
.tree2 { height: 231px; border-bottom: 0; overflow: hidden; }
.row.p { padding-left: 3px; }
.ex { width: 19px; flex: none; }
.pi { width: 37px; display: flex; flex: none; }
.p .fill { padding-left: 1px; }
.p .pi { margin-right: 1px; }
.row.sub { padding-left: 21px; }
.sub .pi { width: 39px; padding-left: 2px; }
.thumb.b { height: 175px; margin: 1px 0 18px; }
.vbar { width: 27px; flex: none; border-right: 1px solid #999; display: flex; flex-direction: column; align-items: center; padding: 0 2px 0 0; }
.vc { width: 22px; height: 22px; display: flex; align-items: center; justify-content: center; flex: none; }
.canvas { flex: 1; background: #000; border-right: 1px solid #8a8a8a; }
.n { fill: none; }
.gray { stroke: #808080; }
.lime { stroke: #0f0; }
.red { stroke: #f00; }
.cyan { stroke: #0ff; }
.w2 { stroke-width: 2; }
.lab { font: 6.500px 'Liberation Sans', Arial, sans-serif; fill: #00c000; }
.lab.c { fill: #00e6e6; }
.tabs { height: 30px; flex: none; display: flex; border-top: 1px solid #999; }
.ltabs { width: 279px; flex: none; display: flex; position: relative; padding-left: 2px; }
.tab { height: 22px; display: flex; align-items: center; border: 1px solid #d6d6d6; border-top: 0; flex: none; }
.start { width: 65px; padding-left: 3px; gap: 10px; }
.des { width: 82px; background: #fff; height: 24px; padding-left: 7px; gap: 10px; }
.fil { width: 64px; padding-left: 4px; gap: 10px; border-left: 0; }
.lib { width: 32px; padding-left: 4px; gap: 3px; border-right: 0; }
.nav { position: absolute; left: 243px; top: 0; }
.dtabs { flex: 1; display: flex; position: relative; min-width: 0; }
.d1 { width: 86px; border: 0; border-right: 1px solid #999; border-bottom: 1px solid #999; gap: 10px; }
.d2 { flex: 1; border: 0; border-bottom: 1px solid #999; padding-left: 6px; gap: 11px; }
.d3 { width: 24px; border: 0; border-bottom: 1px solid #999; border-right: 1px solid #999; }
.d4 { width: 197px; height: 23px; background: #f8f8f8; border: 0; border-bottom: 3px solid #0078d7; padding: 1px 0 0 5px; }
.d4 span { margin: 1px 10px 0; }
.dnav { margin: 0 0 0 2px; }
.cat { height: 116px; flex: none; border-bottom: 1px solid #999; display: flex; flex-direction: column; }
.wide { margin: 0; }
.caps { height: 22px; flex: none; display: flex; justify-content: space-between; padding: 0 236px 0 237px; font-size: 12px; line-height: 19px; }
b { font-weight: 700; }
.lists { display: flex; padding: 0 4px; height: 69px; gap: 7px; flex: none; }
.inst { width: 219px; flex: none; overflow: hidden; }
.inst .head { display: flex; }
.inst .head svg { margin: 3px 0 0 120px; }
.ir { display: flex; height: 18px; align-items: center; flex: none; }
.inst .ir { padding-left: 42px; gap: 6px; }
.ir.sel { background: #e6e6e6; }
.ir.half { background: linear-gradient(90deg, #e6e6e6 31px, #fff 31px 40px, #f0f0f0 40px); }
.vs .thumb.c { height: 9px; margin: 13px 0 9px; }
.pins { width: 300px; flex: none; flex-direction: column; }
.pins .ir { padding-left: 3px; gap: 4px; }
.pins .ir span { margin-left: 2px; }
.sig { flex: 1; }
.srow { height: 18px; margin-top: 44px; padding-left: 564px; background: #e6e6e6; }
.vs .thumb.d { height: 14px; margin: 1px 0 16px; }
.btabs { height: 25px; flex: none; display: flex; padding-left: 2px; }
.bt { height: 21px; display: flex; align-items: center; gap: 9px; padding-left: 5px; border: 1px solid #d6d6d6; border-top: 0; }
.bt:first-child { padding-left: 3px; }
.bt span { margin-left: 2px; }
.cur.bt { background: #fff; height: 23px; padding-left: 7px; }
.coords { height: 21px; flex: none; text-align: right; padding: 2px 6px 0 0; }
.task { height: 34px; flex: none; background: #101010; display: flex; }
.app { height: 34px; display: flex; align-items: center; justify-content: center; flex: none; padding-top: 1px; }
.run { border-bottom: 2px solid #6bb55c; padding-top: 2px; }
.act { background: #333; }
.dl { background: linear-gradient(90deg, #33652e 19px, #2a2a2a 19px); border-color: #4be02b; }
.tray { margin-left: auto; display: flex; align-items: center; color: #fff; }
.tray > .ic { margin-right: 11.500px; }
.tray > span { margin-right: 7px; }
.nt { width: 44px; height: 34px; background: #1c1c1c; display: flex; align-items: center; justify-content: center; }
.tray > i { width: 1px; height: 34px; background: #555; margin: 0 4px 0 9px; }
.dialog { position: absolute; left: 430px; top: 165px; width: 672px; height: 602px; background: #efefef; box-shadow: 0 0 14px rgba(0, 0, 0, .5); display: flex; flex-direction: column; }
.dtitle { height: 32px; flex: none; background: #fff; display: flex; align-items: center; padding: 0 11px 0 8px; }
.dtitle span { margin: 2px 0 0 5px; }
.dtitle svg:last-child { margin-left: auto; margin-bottom: 2px; }
h1 { margin: 25px 0 0; font: bold 16.500px/24px 'DejaVu Sans', 'Noto Sans', sans-serif; text-align: center; }
p { margin: -2px 0 0; text-align: center; line-height: 18px; }
.dlgtabs { display: flex; align-items: flex-end; padding-left: 22px; margin-top: 7px; height: 23px; }
.dlgtabs div { height: 21px; border: 1px solid #d9d9d9; border-left: 0; display: flex; align-items: center; justify-content: center; padding-right: 2px; }
.dlgtabs .cur { position: relative; width: 84px; height: 23px; background: #fff; border-left: 1px solid #d9d9d9; border-bottom: 0; }
.dlgtabs .eq { width: 72px; }
.dlgtabs .tt { width: 83px; padding: 0 0 0 3px; }
.sheet { margin: -1px 24px 0 22px; height: 408px; background: #fff; border: 1px solid #d9d9d9; flex: none; }
.net path { fill: none; stroke: #00007d; }
.net .g { fill: #fff; }
.tiny { font: 3px 'Liberation Sans', Arial, sans-serif; fill: #636; opacity: .7; }
.btns { display: flex; gap: 8px; margin: 16px 0 0 257px; }
button { width: 75px; height: 23px; padding: 0; border: 1px solid #adadad; background: #e1e1e1; font: inherit; line-height: 18px; }
.ok { border: 2px solid #0078d7; }
</style>
